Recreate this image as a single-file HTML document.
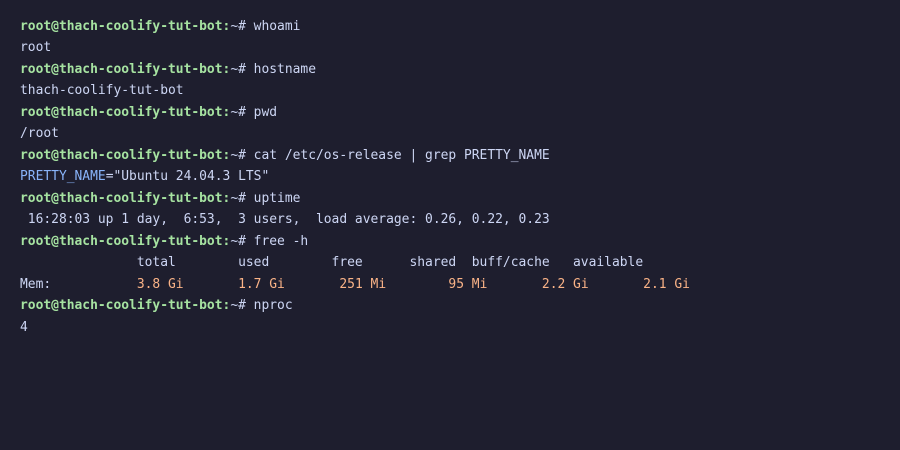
<!DOCTYPE html>
<html><head><meta charset="utf-8"><style>
html,body{margin:0;padding:0;background:#1e1e2e;width:900px;height:450px;overflow:hidden}
pre{margin:0;padding:15.5px 20px;font-family:"DejaVu Sans Mono",monospace;font-size:12.95px;line-height:21.5px;color:#cdd6f4}
.p{color:#a6e3a1;font-weight:bold}
.b{color:#89b4fa}
.o{color:#fab387}
</style></head><body><pre><span class="p">root@thach-coolify-tut-bot:</span>~# whoami
root
<span class="p">root@thach-coolify-tut-bot:</span>~# hostname
thach-coolify-tut-bot
<span class="p">root@thach-coolify-tut-bot:</span>~# pwd
/root
<span class="p">root@thach-coolify-tut-bot:</span>~# cat /etc/os-release | grep PRETTY_NAME
<span class="b">PRETTY_NAME</span>="Ubuntu 24.04.3 LTS"
<span class="p">root@thach-coolify-tut-bot:</span>~# uptime
 16:28:03 up 1 day,  6:53,  3 users,  load average: 0.26, 0.22, 0.23
<span class="p">root@thach-coolify-tut-bot:</span>~# free -h
               total        used        free      shared  buff/cache   available
Mem:           <span class="o">3.8 Gi</span>       <span class="o">1.7 Gi</span>       <span class="o">251 Mi</span>        <span class="o">95 Mi</span>       <span class="o">2.2 Gi</span>       <span class="o">2.1 Gi</span>
<span class="p">root@thach-coolify-tut-bot:</span>~# nproc
4</pre></body></html>
